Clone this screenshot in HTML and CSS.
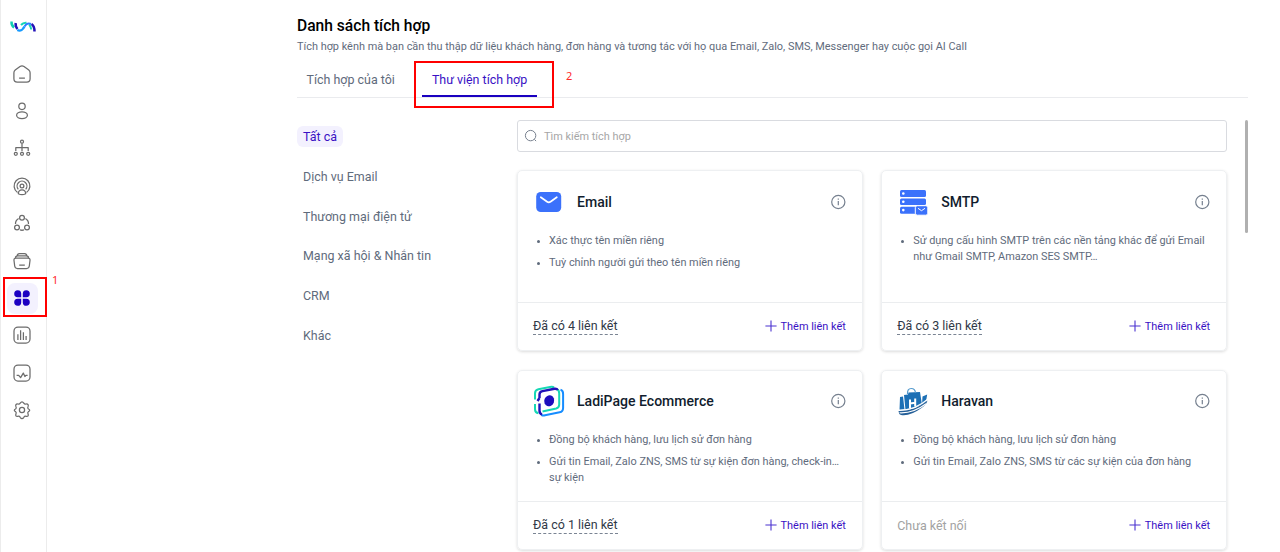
FILE: index.html
```html
<!DOCTYPE html>
<html lang="vi">
<head>
<meta charset="utf-8">
<title>Danh sách tích hợp</title>
<link rel="stylesheet" href="styles.css">
</head>
<body>
<svg class="defs" width="0" height="0">
  <symbol id="info" viewBox="0 0 16 16"><g fill="none" stroke="#76808f" stroke-width="1.2"><circle cx="8.300" cy="8" r="6.600"/><path d="M8.300 7v4.200M8.300 4.600v1.200"/></g></symbol>
  <symbol id="plus" viewBox="0 0 12 12"><path d="M6 .4v11.2M.4 6h11.2" stroke="#4a32d0" stroke-width="1.1" fill="none"/></symbol>
</svg>
<div class="app">
  <nav class="side">
    <a class="logo"><svg width="28" height="17" viewBox="0 0 28 17" fill="none" stroke-width="2"><path d="M2.500 3.500c-.2 2.500.6 4.500 2.600 6" stroke="#10cfb3" stroke-width="2.400"/><path d="M12 7c1.500-1.800 3.500-2.500 5.500-2.300M20.200 6.500c1.200 1.300 1.800 3 2 5" stroke="#15d5b6"/><path d="M8.300 12c3.200 1.500 5.700-.3 7.200-3.500" stroke="#169aff" stroke-width="2.300"/><path d="M15.500 8.500c1.700-2.700 4-3.600 6.500-2.500" stroke="#2b7cff"/><path d="M6.700 5c-.3 2.500.3 4.400 1.800 6M22.500 6c2.200 1.400 3 3.600 3 7.500" stroke="#2212b8" stroke-width="2.500"/></svg></a>
    <a class="item"><svg viewBox="0 0 20 20"><path d="M3.200 6.100 8 2.500q2-1.300 4 0l4.800 3.600q1.300 1 1.300 2.700v5.900q0 3.400-3.400 3.400H5.300q-3.400 0-3.400-3.400V8.800q0-1.700 1.300-2.700ZM7.100 14.200h5.800"/></svg></a>
    <a class="item"><svg viewBox="0 0 20 20"><circle cx="10" cy="5.300" r="3.200"/><ellipse cx="10" cy="14.200" rx="5.400" ry="3.400"/></svg></a>
    <a class="item"><svg viewBox="0 0 20 20"><circle cx="10" cy="3.700" r="1.500"/><path d="M10 5.200v8M3.800 13V9.700h12.400V13"/><circle cx="3.800" cy="15.800" r="1.500"/><circle cx="10" cy="15.800" r="1.500"/><circle cx="16.200" cy="15.800" r="1.500"/></svg></a>
    <a class="item"><svg viewBox="0 0 20 20"><path d="M5.500 16.500a7.900 7.900 0 1 1 9 0M6.300 13.300a4.900 4.900 0 1 1 7.400 0"/><circle cx="10" cy="9.900" r="1.900"/><path d="M6.300 17.700c.2-5.200 7.200-5.200 7.400 0-2 1-5.400 1-7.400 0Z"/></svg></a>
    <a class="item"><svg viewBox="0 0 20 20"><circle cx="10" cy="4.700" r="2.400"/><circle cx="5" cy="14.400" r="2.400"/><circle cx="15" cy="14.400" r="2.400"/><path d="M6.600 5.500Q3.300 7.500 3.500 11M13.400 5.500q3.300 2 3.100 5.500M8 16.900q2 .7 4 0"/></svg></a>
    <a class="item"><svg viewBox="0 0 20 20"><path d="M4.300 7h11.400q2.600 0 2.300 2.500l-.7 5.500q-.3 2.500-2.800 2.500h-9q-2.500 0-2.800-2.500L2 9.500Q1.700 7 4.300 7ZM3.300 6.900q.2-2.100 2.300-2.100h8.800q2.100 0 2.300 2.100M5.200 4.700q.2-2.100 2.200-2.100h5.200q2 0 2.200 2.100M7.200 14h5.600"/></svg></a>
    <a class="item active"><svg viewBox="0 0 20 20"><path d="M9.200 9.200H5.600a3.500 3.500 0 1 1 3.600-3.600ZM10.800 9.200V5.600a3.500 3.500 0 1 1 3.600 3.600ZM9.200 10.800v3.600a3.500 3.500 0 1 1-3.600-3.600ZM10.800 10.800h3.600a3.500 3.500 0 1 1-3.600 3.600Z"/></svg></a>
    <a class="item"><svg viewBox="0 0 20 20"><rect x="2" y="2" width="16" height="16" rx="4"/><path d="M5.900 9.200v5.700M8.600 5.200v9.700M11.400 7.300v7.600M14.100 11v3.900"/></svg></a>
    <a class="item"><svg viewBox="0 0 20 20"><rect x="2" y="2" width="16" height="16" rx="4"/><path d="m4.600 12.400 2.100-.1 1.900 2.300 2.700-4.500 1.600 3.400 1-1.200h1.700"/></svg></a>
    <a class="item"><svg viewBox="0 0 20 20"><circle cx="10" cy="10" r="2.600"/><path d="M8.200 3.200q1.800-2.700 3.600 0 .8 1.200 2.300.8 3-.2 1.900 2.800-.7 1.200.4 2.200 2.600 1 0 2.600-1.100 1-.4 2.200 1.100 3-1.900 2.500-1.500-.4-2.300 1-1.800 2.700-3.600 0-.8-1.400-2.300-1-3 .5-1.900-2.500.7-1.200-.4-2.200-2.600-1.600 0-2.600 1.100-1 .4-2.200-1.100-3 1.900-2.800 1.500.4 2.300-.8Z"/></svg></a>
  </nav>
  <main class="main">
    <h1 class="title">Danh sách tích hợp</h1>
    <p class="subtitle">Tích hợp kênh mà bạn cần thu thập dữ liệu khách hàng, đơn hàng và tương tác với họ qua Email, Zalo, SMS, Messenger hay cuộc gọi AI Call</p>
    <div class="tabs"><a class="tab">Tích hợp của tôi</a><a class="tab tab-on">Thư viện tích hợp</a></div>
    <div class="body">
      <ul class="cats">
        <li class="cat-on">Tất cả</li><li>Dịch vụ Email</li><li>Thương mại điện tử</li><li>Mạng xã hội &amp; Nhắn tin</li><li>CRM</li><li>Khác</li>
      </ul>
      <section class="library">
        <div class="search"><svg width="14" height="14" viewBox="0 0 14 14" fill="none" stroke="#77808e"><circle cx="6.600" cy="6.600" r="5.200"/><path d="m10.400 10.400 1.700 1.700"/></svg><span>Tìm kiếm tích hợp</span></div>
        <div class="grid">
          <article class="card">
            <header class="head"><svg class="brand" viewBox="0 0 32 32"><rect x="3.200" y="6" width="25" height="20" rx="4.500" fill="#3b71fb"/><path d="m7.800 11.200 6.300 4.500q1.700 1.200 3.400 0l6.300-4.500" fill="none" stroke="#fff" stroke-width="1.700" stroke-linecap="round"/></svg><h2>Email</h2><svg class="info"><use href="#info"/></svg></header>
            <ul class="points"><li>Xác thực tên miền riêng</li><li>Tuỳ chỉnh người gửi theo tên miền riêng</li></ul>
            <footer class="foot"><span class="linked">Đã có 4 liên kết</span><a class="add"><svg><use href="#plus"/></svg>Thêm liên kết</a></footer>
          </article>
          <article class="card">
            <header class="head"><svg class="brand" viewBox="0 0 32 32"><g fill="#3b71fb"><rect x="3" y="4" width="26" height="7" rx="1.500"/><rect x="3" y="12.500" width="26" height="6.500" rx="1.500"/><rect x="3" y="20.700" width="20" height="7" rx="1.500"/><rect x="18.300" y="19.700" width="12.500" height="9.500" rx="2" stroke="#fff"/></g><g fill="#fff"><circle cx="6.300" cy="7.500" r="1.300"/><circle cx="6.300" cy="15.800" r="1.300"/><circle cx="6.300" cy="24.100" r="1.300"/></g><path d="m21 22.300 3.500 2.400 3.500-2.400" fill="none" stroke="#fff"/></svg><h2>SMTP</h2><svg class="info"><use href="#info"/></svg></header>
            <ul class="points"><li>Sử dụng cấu hình SMTP trên các nền tảng khác để gửi Email<br>như Gmail SMTP, Amazon SES SMTP…</li></ul>
            <footer class="foot"><span class="linked">Đã có 3 liên kết</span><a class="add"><svg><use href="#plus"/></svg>Thêm liên kết</a></footer>
          </article>
          <article class="card">
            <header class="head"><svg class="brand" viewBox="0 0 32 32" fill="none" stroke-width="2"><path d="M27.500 4.800q2.700.7 2.600 4.200v14q0 3.600-3.500 4.300L12 30.300q-2 .4-3.500-.3" stroke="#168dff"/><path d="M2 14.500V8.200q0-3.200 3.400-4L17 1.900q3-.5 4 .8M2 19v5.200q0 3.500 3.400 4M9.500 26.500l13.700-3q3-.8 3-4V8.500q0-3.300-2-4.200" stroke="#16d8b5"/><path d="M6.500 13V9.500q0-2.800 3-3.400L21.500 3.800q2.500-.3 3.200 1.200M6.500 18.500v7.300q.2 3 2.500 3.700M6.500 13l-2 3" stroke="#2112b9" stroke-width="2.400"/><ellipse cx="16.200" cy="15.800" rx="4.900" ry="5.600" transform="rotate(20 16.200 15.800)" fill="#1d0dbd"/></svg><h2>LadiPage Ecommerce</h2><svg class="info"><use href="#info"/></svg></header>
            <ul class="points"><li>Đồng bộ khách hàng, lưu lịch sử đơn hàng</li><li>Gửi tin Email, Zalo ZNS, SMS từ sự kiện đơn hàng, check-in…<br>sự kiện</li></ul>
            <footer class="foot"><span class="linked">Đã có 1 liên kết</span><a class="add"><svg><use href="#plus"/></svg>Thêm liên kết</a></footer>
          </article>
          <article class="card">
            <header class="head"><svg class="brand" viewBox="0 0 32 32"><path d="m3 12 3-.5 1.500 13L2.500 25ZM25.500 11.500l4.700-2-1.200 7-4 3.500ZM7 10l4-.5.500-2 11.500-.5 2 13-16.500 5Z" fill="#1d70b5"/><path d="M10.500 9q-.3-5.500 3.700-5.500T18.500 8" fill="none" stroke="#559bce" stroke-width="1.200"/><path d="M13 14.500v8.500M18.200 13.500v8M13 18.600l5.200-.8" stroke="#fff" stroke-width="2"/><path d="M1.500 26q16 .5 29-10.500-1 4-6 7.500Q13 31.500 4 30q-2.500-1-2.500-4Z" fill="#245f98"/><path d="M2 25q16 .5 29-11M2.500 27.800q14 .7 26.500-9" fill="none" stroke="#fff" stroke-width="1.100"/></svg><h2>Haravan</h2><svg class="info"><use href="#info"/></svg></header>
            <ul class="points"><li>Đồng bộ khách hàng, lưu lịch sử đơn hàng</li><li>Gửi tin Email, Zalo ZNS, SMS từ các sự kiện của đơn hàng</li></ul>
            <footer class="foot"><span class="none">Chưa kết nối</span><a class="add"><svg><use href="#plus"/></svg>Thêm liên kết</a></footer>
          </article>
        </div>
      </section>
      <div class="scroll"></div>
    </div>
  </main>
  <div class="mark mark-1"></div><span class="num num-1">1</span>
  <div class="mark mark-2"></div><span class="num num-2">2</span>
</div>
</body>
</html>
```
FILE: styles.css
```css
* { box-sizing: border-box; margin: 0; padding: 0; }
body { font-family: Roboto, sans-serif; color: #5f6b7c; background: #fff; overflow: hidden; }
ul { list-style: none; }
.defs { position: absolute; }
.app { position: relative; display: flex; height: 552px; overflow: hidden; }

.side { width: 47px; flex: none; border: solid #ececec; border-width: 0 1px; display: flex; flex-direction: column; align-items: center; padding: 18px 3px 0 0; }
.logo { height: 37.2px; margin-left: 2px; }
.item { width: 31px; height: 31px; margin-bottom: 6.4px; flex: none; display: grid; place-items: center; border-radius: 8px; }
.logo + .item { margin-top: 3px; }
.item svg { width: 20px; height: 20px; fill: none; stroke: #6c6c6c; stroke-width: 1.25; stroke-linejoin: round; }
.active { background: #f3f1fe; }
.item.active svg { fill: #1c00c2; stroke: none; }

.main { flex: none; width: 1201px; padding: 15px 0 0 250px; }
.title { font-size: 15.6px; line-height: 22px; font-weight: 500; color: #000; }
.subtitle { font-size: 10.92px; line-height: 16px; margin-top: 2px; white-space: nowrap; }
.tabs { display: flex; gap: 18px; height: 43px; border-bottom: 1px solid #eaebee; }
.tab { height: 42px; padding: 14px 9.5px 0; font-size: 12.46px; line-height: 21px; white-space: nowrap; }
.tab-on { color: #3a12c4; border-bottom: 2px solid #1a00c0; }

.body { display: flex; margin-top: 22px; }
.cats { width: 220px; flex: none; padding-top: 6px; font-size: 12.46px; line-height: 21px; }
.cats li { width: fit-content; padding: 0 6px; border-radius: 6px; margin-bottom: 18.8px; }
.cat-on { background: #f3f1fe; color: #3a12c4; }
.library { width: 710px; flex: none; }
.search { height: 32px; border: 1px solid #d9dbe0; border-radius: 3px; display: flex; align-items: center; gap: 6px; padding-left: 6px; font-size: 10.92px; color: #a6a6a6; }
.scroll { width: 4px; height: 113px; background: #b0b0b0; border-radius: 2px; margin-left: 18px; }

.grid { display: grid; grid-template-columns: 1fr 1fr; gap: 19px 18.5px; margin-top: 18px; }
.card { height: 181px; border-radius: 5px; border: 1px solid #eef0f2; box-shadow: 0 1px 3px rgba(0,0,0,.14); display: flex; flex-direction: column; }
.card:nth-child(n+3) { height: 180px; }
.head { display: flex; align-items: center; height: 32px; margin: 15px 16px 0 15px; }
.card:nth-child(n+3) .head { margin-top: 14px; }
.brand { width: 32px; height: 32px; margin-right: 12px; }
.head h2 { font-size: 14.04px; font-weight: 500; color: #111d2e; flex: 1; }
.info { width: 16px; height: 16px; }
.points { flex: 1; padding: 15px 12px 0 31px; font-size: 10.92px; line-height: 15.8px; white-space: nowrap; }
.points li { position: relative; margin-bottom: 6px; }
.points li::before { content: ""; position: absolute; left: -12px; top: 7px; width: 3px; height: 3px; border-radius: 50%; background: #5f6b7c; }
.foot { height: 48px; flex: none; border-top: 1px solid #ebedef; display: flex; align-items: center; justify-content: space-between; padding: 0 16px 1px 15px; }
.linked, .none { font-size: 12.46px; line-height: 17px; color: #303947; }
.linked { border-bottom: 1px dashed #7a8493; }
.none { color: #a2a2a2; }
.add { display: flex; align-items: center; gap: 4px; font-size: 10.92px; color: #3a12c4; }
.add svg { width: 12px; height: 12px; }

.mark { position: absolute; border: 2px solid #f00; }
.mark-1 { left: 3px; top: 277px; width: 44px; height: 40px; }
.mark-2 { left: 414px; top: 61px; width: 140px; height: 47px; }
.num { position: absolute; font: 11px "Noto Sans", sans-serif; color: #ff2a2a; }
.num-1 { left: 52px; top: 272px; }
.num-2 { left: 566px; top: 68px; }
```
